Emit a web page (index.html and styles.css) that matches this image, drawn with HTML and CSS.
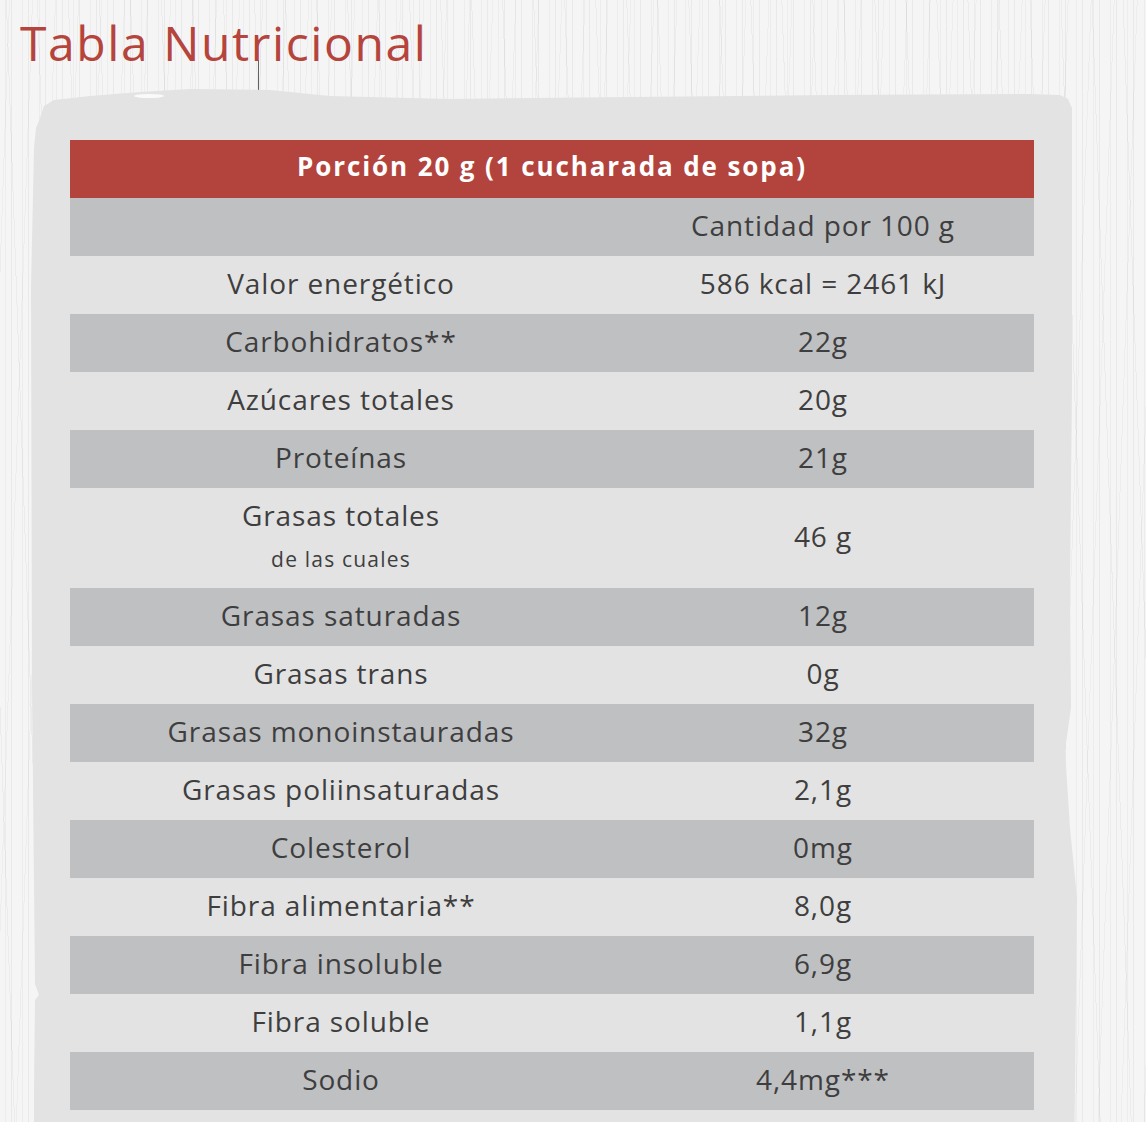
FILE: index.html
```html
<!DOCTYPE html>
<html lang="es">
<head>
<meta charset="utf-8">
<title>Tabla Nutricional</title>
<link rel="stylesheet" href="styles.css">
</head>
<body>
<h1 class="title">Tabla Nutricional</h1>
<section class="panel">
  <div class="nt">
    <div class="nt-head">Porción 20 g (1 cucharada de sopa)</div>
    <div class="row dark"><div class="cell"></div><div class="cell">Cantidad por 100 g</div></div>
    <div class="row"><div class="cell">Valor energético</div><div class="cell">586 kcal = 2461 kJ</div></div>
    <div class="row dark"><div class="cell">Carbohidratos**</div><div class="cell">22g</div></div>
    <div class="row"><div class="cell">Azúcares totales</div><div class="cell">20g</div></div>
    <div class="row dark"><div class="cell">Proteínas</div><div class="cell">21g</div></div>
    <div class="row tall"><div class="cell stack"><span class="main">Grasas totales</span><span class="sub">de las cuales</span></div><div class="cell">46 g</div></div>
    <div class="row dark"><div class="cell">Grasas saturadas</div><div class="cell">12g</div></div>
    <div class="row"><div class="cell">Grasas trans</div><div class="cell">0g</div></div>
    <div class="row dark"><div class="cell">Grasas monoinstauradas</div><div class="cell">32g</div></div>
    <div class="row"><div class="cell">Grasas poliinsaturadas</div><div class="cell">2,1g</div></div>
    <div class="row dark"><div class="cell">Colesterol</div><div class="cell">0mg</div></div>
    <div class="row"><div class="cell">Fibra alimentaria**</div><div class="cell">8,0g</div></div>
    <div class="row dark"><div class="cell">Fibra insoluble</div><div class="cell">6,9g</div></div>
    <div class="row"><div class="cell">Fibra soluble</div><div class="cell">1,1g</div></div>
    <div class="row dark"><div class="cell">Sodio</div><div class="cell">4,4mg***</div></div>
  </div>
</section>
</body>
</html>
```
FILE: styles.css
```css
html, body {
  margin: 0;
  padding: 0;
}
body {
  width: 1146px;
  height: 1122px;
  overflow: hidden;
  font-family: "Open Sans", "Liberation Sans", sans-serif;
  color: #3e3e3e;
  background-color: #f5f5f5;
  background-image:
    linear-gradient(rgba(60,60,60,0.8), rgba(60,60,60,0.8)),
    repeating-linear-gradient(90deg, rgba(0,0,0,0) 0 5px, rgba(0,0,0,0.035) 5px 6px, rgba(0,0,0,0) 6px 11px, rgba(0,0,0,0.05) 11px 12px, rgba(0,0,0,0) 12px 17px),
    repeating-linear-gradient(92deg, rgba(255,255,255,0) 0 9px, rgba(0,0,0,0.03) 9px 10px, rgba(255,255,255,0) 10px 23px),
    repeating-linear-gradient(88deg, rgba(255,255,255,0) 0 14px, rgba(0,0,0,0.04) 14px 15px, rgba(255,255,255,0) 15px 31px);
  background-size: 1px 36px, auto, auto, auto;
  background-position: 258px 60px, 0 0, 0 0, 0 0;
  background-repeat: no-repeat, repeat, repeat, repeat;
}
.title {
  margin: 0;
  padding: 19px 0 0 20px;
  font-size: 48px;
  line-height: 48px;
  font-weight: 400;
  letter-spacing: 1.6px;
  color: #b5443c;
}
.panel {
  position: relative;
  margin: 21px 0 0 28px;
  width: 1052px;
  box-sizing: border-box;
  padding: 52px 46px 60px 42px;
  background: #e3e3e3;
  clip-path: polygon(
    12px 30px, 16px 18px, 26px 12px, 62px 8px, 112px 4px, 162px 1px, 242px 2px,
    302px 8px, 422px 11px, 602px 9px, 802px 7px, 1002px 6px, 1032px 7px,
    1040px 11px, 1044px 20px, 1044px 300px, 1042px 500px, 1043px 620px,
    1037px 662px, 1042px 740px, 1049px 810px, 1047px 1000px, 1044px 1200px,
    6px 1200px, 6px 1000px, 7px 912px, 11px 907px, 7px 896px, 4px 600px,
    3px 200px, 6px 60px, 8px 40px
  );
}
.panel::before {
  content: "";
  position: absolute;
  left: 106px;
  top: 6px;
  width: 30px;
  height: 4px;
  border-radius: 50%;
  background: rgba(255,255,255,0.8);
}
.nt {
  width: 964px;
}
.nt-head {
  height: 58px;
  box-sizing: border-box;
  padding-bottom: 5px;
  background: #b3443d;
  color: #ffffff;
  font-weight: 700;
  font-size: 26px;
  line-height: 53px;
  letter-spacing: 1.9px;
  text-align: center;
}
.row {
  display: grid;
  grid-template-columns: 542px 422px;
  height: 58px;
  background: #e3e3e3;
}
.row.dark {
  background: #bfc0c2;
}
.row.tall {
  height: 100px;
}
.cell {
  box-sizing: border-box;
  padding-bottom: 4px;
  font-size: 28px;
  line-height: 54px;
  letter-spacing: 0.9px;
  text-align: center;
  white-space: nowrap;
  display: flex;
  align-items: center;
  justify-content: center;
}
.cell.stack {
  flex-direction: column;
  justify-content: flex-start;
  padding-bottom: 0;
}
.stack .main {
  line-height: 54px;
}
.stack .sub {
  font-size: 21px;
  line-height: 35px;
  letter-spacing: 1.2px;
}
```
